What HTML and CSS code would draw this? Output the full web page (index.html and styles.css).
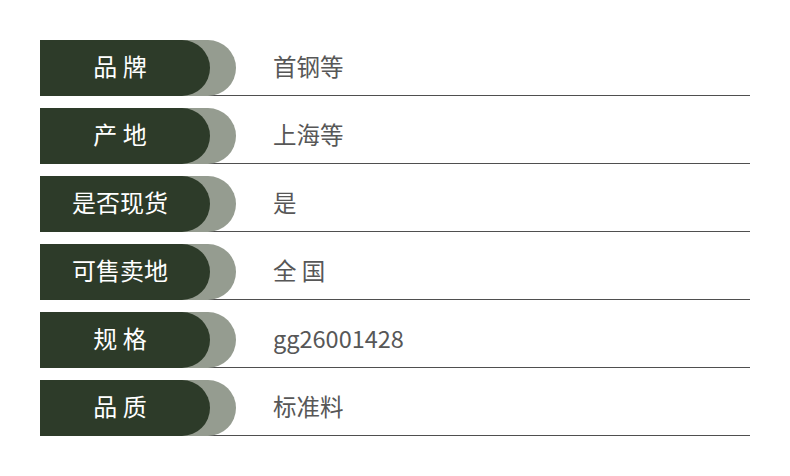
FILE: index.html
```html
<!DOCTYPE html>
<html lang="zh">
<head>
<meta charset="utf-8">
<link rel="stylesheet" href="styles.css">
</head>
<body>
<div class="list">
  <div class="row"><div class="tab"><div class="label">品 牌</div></div><div class="value">首钢等</div></div>
  <div class="row"><div class="tab"><div class="label">产 地</div></div><div class="value">上海等</div></div>
  <div class="row"><div class="tab"><div class="label">是否现货</div></div><div class="value">是</div></div>
  <div class="row"><div class="tab"><div class="label">可售卖地</div></div><div class="value">全 国</div></div>
  <div class="row"><div class="tab"><div class="label">规 格</div></div><div class="value">gg26001428</div></div>
  <div class="row"><div class="tab"><div class="label">品 质</div></div><div class="value">标准料</div></div>
</div>
</body>
</html>
```
FILE: styles.css
```css
html, body {
  margin: 0;
  padding: 0;
  background: #ffffff;
}
body {
  font-family: "Noto Sans CJK SC", "Noto Sans", sans-serif;
}
.list {
  display: flex;
  flex-direction: column;
  gap: 12px;
  padding: 40px 40px 0 40px;
  width: 710px;
}
.row {
  display: flex;
  align-items: flex-start;
  height: 56px;
  box-shadow: inset 0 -1px 0 #4f4f4f;
}
.tab {
  width: 170px;
  height: 56px;
  padding-right: 26px;
  background: #959c90;
  border-radius: 0 28px 28px 0;
  flex-shrink: 0;
}
.label {
  width: 170px;
  height: 56px;
  background: #2d3b29;
  border-radius: 0 28px 28px 0;
  color: #ffffff;
  font-size: 24px;
  line-height: 52px;
  text-align: center;
  padding-right: 10px;
  box-sizing: border-box;
}
.value {
  margin-left: 37px;
  font-size: 23.5px;
  color: #575757;
  line-height: 52px;
}
```
